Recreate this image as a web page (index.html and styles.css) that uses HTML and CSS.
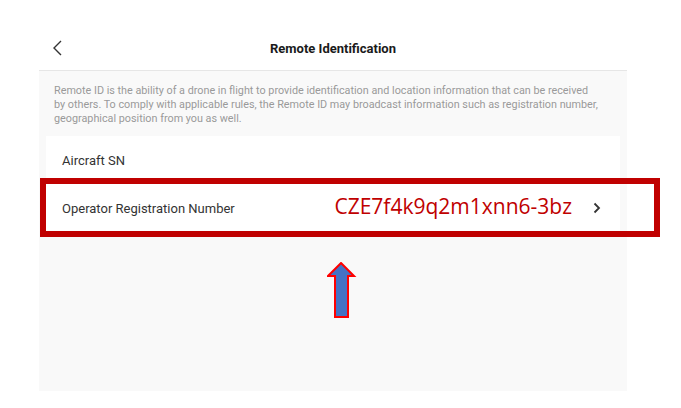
FILE: index.html
```html
<!DOCTYPE html>
<html>
<head>
<meta charset="utf-8">
<link rel="stylesheet" href="styles.css">
</head>
<body>
<div class="screen">
  <header class="topbar">
    <svg class="back" width="12" height="16" viewBox="0 0 12 16"><path d="M9 1 L2 8 L9 15" fill="none" stroke="#333" stroke-width="1.4"/></svg>
    <h1 class="title">Remote Identification</h1>
  </header>
  <main class="panel">
    <p class="desc">Remote ID is the ability of a drone in flight to provide identification and location information that can be received by others. To comply with applicable rules, the Remote ID may broadcast information such as registration number, geographical position from you as well.</p>
    <section class="card">
      <div class="row"><span class="label">Aircraft SN</span></div>
      <div class="row"><span class="label">Operator Registration Number</span>
        <span class="value">CZE7f4k9q2m1xnn6-3bz</span>
        <svg class="chev" width="8" height="12" viewBox="0 0 8 12"><path d="M1.5 1.5 L6 6 L1.5 10.5" fill="none" stroke="#333" stroke-width="1.8"/></svg>
      </div>
    </section>
  </main>
</div>
<div class="highlight"></div>
<svg class="arrow" width="30" height="58" viewBox="0 0 30 58"><path d="M14 1 L27 14 L21 14 L21 55 L8 55 L8 14 L1 14 Z" fill="#4472c4" stroke="#ff0000" stroke-width="2" stroke-linejoin="miter"/></svg>
</body>
</html>
```
FILE: styles.css
```css
html, body {
  margin: 0;
  padding: 0;
  background: #ffffff;
  width: 681px;
  height: 408px;
  overflow: hidden;
  font-family: Roboto, "Liberation Sans", sans-serif;
}
.screen {
  margin: 26px 0 0 39px;
  width: 588px;
}
.topbar {
  height: 44px;
  border-bottom: 1px solid #e6e6e6;
  display: flex;
  align-items: center;
  justify-content: center;
  position: relative;
}
.back {
  position: absolute;
  left: 13px;
  top: 14px;
}
.title {
  margin: 0;
  font-size: 13px;
  font-weight: 700;
  color: #1a1a1a;
}
.panel {
  background: #f9f9f9;
  height: 320px;
  padding: 13px 7px 0 7px;
  box-sizing: border-box;
}
.desc {
  margin: 0 0 10px 0;
  padding: 0 21px 0 8px;
  font-size: 10.8px;
  line-height: 14px;
  color: #9a9a9a;
}
.card {
  background: #ffffff;
}
.row {
  height: 48px;
  display: flex;
  align-items: center;
  padding: 0 19px 0 16px;
}
.label {
  font-size: 13px;
  color: #333333;
  flex: 1;
}
.value {
  font-family: "Open Sans", sans-serif;
  font-size: 21px;
  color: #c00000;
  margin-right: 21px;
  margin-top: -4px;
}
.highlight {
  position: absolute;
  left: 40px;
  top: 178px;
  width: 608px;
  height: 47px;
  border: 6px solid #c00000;
}
.arrow {
  position: absolute;
  left: 327px;
  top: 262px;
}
```
